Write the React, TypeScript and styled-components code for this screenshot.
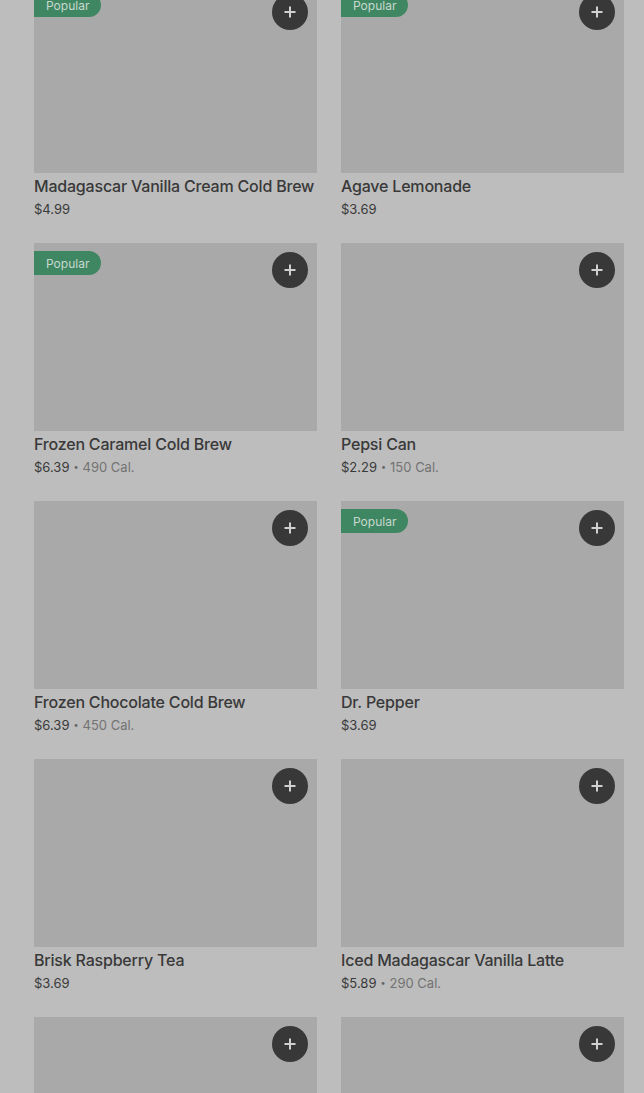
import React, { FC } from "react";
import styled, { createGlobalStyle } from "styled-components";

interface Item {
  name: string;
  price: string;
  cal?: string;
  popular?: boolean;
}

const items: Item[] = [
  { name: "Madagascar Vanilla Cream Cold Brew", price: "$4.99", popular: true },
  { name: "Agave Lemonade", price: "$3.69", popular: true },
  { name: "Frozen Caramel Cold Brew", price: "$6.39", cal: "490 Cal.", popular: true },
  { name: "Pepsi Can", price: "$2.29", cal: "150 Cal." },
  { name: "Frozen Chocolate Cold Brew", price: "$6.39", cal: "450 Cal." },
  { name: "Dr. Pepper", price: "$3.69", popular: true },
  { name: "Brisk Raspberry Tea", price: "$3.69" },
  { name: "Iced Madagascar Vanilla Latte", price: "$5.89", cal: "290 Cal." },
  { name: "", price: "" },
  { name: "", price: "" },
];

const App: FC = () => {
  return (
    <>
      <GlobalStyle />
      <Page>
        <Grid>
          {items.map((item, i) => (
            <Card key={i}>
              <Thumb>
                {item.popular && <Badge>Popular</Badge>}
                <AddButton aria-label="Add">
                  <svg width="12" height="12" viewBox="0 0 12 12">
                    <path d="M6 0.5v11M0.5 6h11" stroke="#d0d0d0" strokeWidth="2" />
                  </svg>
                </AddButton>
              </Thumb>
              {item.name && <Title>{item.name}</Title>}
              {item.price && (
                <Meta>
                  <Price>{item.price}</Price>
                  {item.cal && (
                    <>
                      <Dot>•</Dot>
                      <Cal>{item.cal}</Cal>
                    </>
                  )}
                </Meta>
              )}
            </Card>
          ))}
        </Grid>
      </Page>
    </>
  );
};

const GlobalStyle = createGlobalStyle`
  html, body {
    margin: 0;
    padding: 0;
    background: #bdbdbd;
    overflow: hidden;
  }
  body {
    font-family: Inter, "Noto Sans", sans-serif;
  }
`;

const Page = styled.div`
  height: 1093px;
  overflow: hidden;
  background: #bdbdbd;
`;

const Grid = styled.div`
  display: grid;
  grid-template-columns: 283px 283px;
  column-gap: 24px;
  row-gap: 25px;
  padding: 0 20px 0 34px;
  margin-top: -15px;
`;

const Card = styled.div`
  display: flex;
  flex-direction: column;
`;

const Thumb = styled.div`
  position: relative;
  height: 188px;
  background: #a9a9a9;
`;

const Badge = styled.div`
  position: absolute;
  top: 8px;
  left: 0;
  height: 24px;
  padding: 0 12px;
  display: flex;
  align-items: center;
  background: #3f8762;
  color: #c8d8cf;
  font-size: 12px;
  border-radius: 0 12px 12px 0;
`;

const AddButton = styled.button`
  position: absolute;
  top: 9px;
  right: 9px;
  width: 36px;
  height: 36px;
  border: none;
  padding: 0;
  border-radius: 50%;
  background: #383838;
  display: flex;
  align-items: center;
  justify-content: center;
`;

const Title = styled.div`
  margin-top: 3px;
  font-size: 16px;
  line-height: 20px;
  font-weight: 500;
  letter-spacing: -0.2px;
  color: #393939;
  white-space: nowrap;
`;

const Meta = styled.div`
  margin-top: 4px;
  display: flex;
  align-items: center;
  font-size: 13px;
  line-height: 18px;
`;

const Price = styled.span`
  color: #3a3a3a;
`;

const Dot = styled.span`
  color: #666;
  font-size: 9px;
  margin: 0 4px;
`;

const Cal = styled.span`
  color: #737373;
`;

export default App;
